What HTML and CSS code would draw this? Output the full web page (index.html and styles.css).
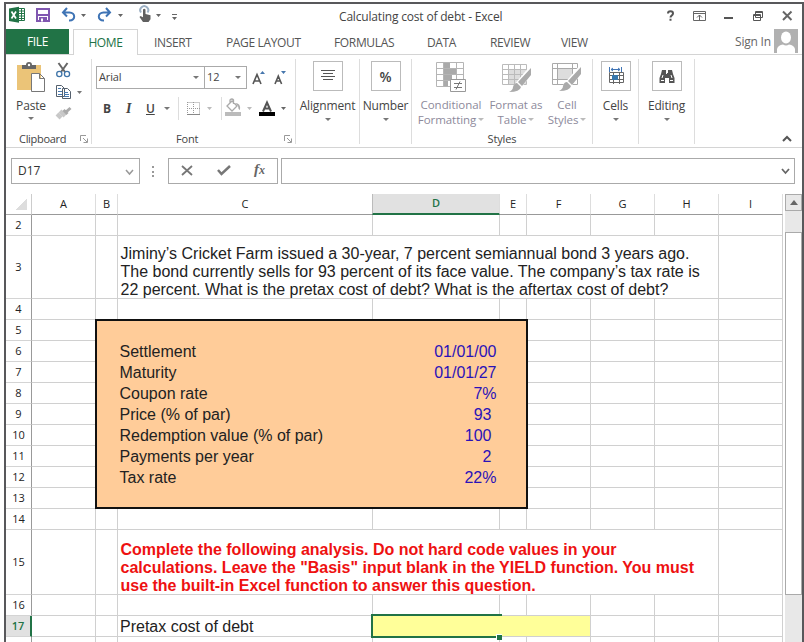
FILE: index.html
```html
<!DOCTYPE html>
<html lang="en">
<head>
    <meta charset="utf-8">
    <meta name="viewport" content="width=device-width, initial-scale=1.0">
    <title>Calculating cost of debt - Excel</title>
    <link rel="stylesheet" href="styles.css">
</head>
<body>
    <div class="window">
        <div class="titlebar">
            <svg class="quick-icons" width="180" height="25" viewBox="6 4 180 25">
                <path fill="#fff" stroke="#217346" d="M17.5 8.500h7v12h-7z"/>
                <path stroke="#217346" d="M19 11h5M19 13.500h5M19 16h5M19 18.500h5M21.500 9v11"/>
                <path fill="#217346" d="M9 8.500l10-1.800v16l-10-1.700z"/>
                <path stroke="#fff" stroke-width="1.700" d="M11.500 11.500l4.500 7M16 11.500l-4.500 7"/>
                <path fill="#fff" stroke="#8057b0" stroke-width="2" d="M37 9h12v12H37z"/>
                <path fill="#8057b0" d="M36 14h14v2H36zM39 17h8v5h-8z"/>
                <path fill="#fff" d="M41 18.500h2v3h-2z"/>
                <path fill="none" stroke="#3f74b5" stroke-width="2" d="M67 8l-4 4.500 4 4M63 12.500h6.500c6 0 6.500 8 0 8H69"/>
                <path fill="none" stroke="#3f74b5" stroke-width="2" d="M106 8l4 4.500-4 4M110 12.500h-6.500c-6 0-6.500 8 0 8h.5"/>
                <path fill="#666" d="M81 14h5l-2.500 3zM118 14h5l-2.500 3zM156 14h5l-2.500 3zM172 17h5l-2.500 3z"/>
                <path stroke="#666" d="M172 14.500h5"/>
                <path fill="none" stroke="#9cb0c4" stroke-width="2" d="M141 12.500a4 4 0 1 1 6.500 0"/>
                <path fill="#606060" d="M143 9.500q1.300-1.500 2.500 0V14l5 1.200v4L148.500 22H143l-3.500-5 1-1 2.500 1.300z"/>
            </svg>
            <div class="title">Calculating cost of debt - Excel</div>
            <svg class="window-icons" width="140" height="25" viewBox="662 4 140 25">
                <path fill="none" stroke="#555" stroke-width="2" d="M668 13.500c0-3 5-3 5 0 0 2-2.500 2-2.500 4M670.500 18.800v2"/>
                <path fill="none" stroke="#666" d="M693.500 11.500h12v9h-12zM694 13.500h11M699.500 20v-5M697 17.500l2.500-2.500 2.500 2.500"/>
                <path stroke="#555" stroke-width="2" d="M724 18h9"/>
                <path fill="#fff" stroke="#555" d="M755.500 11.500h7v6h-7zM755 12.500h8M753.500 14.500h7v6h-7zM753 15.500h8"/>
                <path stroke="#666" stroke-width="2" d="M783 11.500l8.500 8.500M791.500 11.500L783 20"/>
            </svg>
        </div>

        <div class="tabs">
            <div class="tab file">FILE</div>
            <div class="tab home">HOME</div>
            <div class="tab insert">INSERT</div>
            <div class="tab page">PAGE LAYOUT</div>
            <div class="tab formulas">FORMULAS</div>
            <div class="tab data">DATA</div>
            <div class="tab review">REVIEW</div>
            <div class="tab view">VIEW</div>
            <div class="signin">Sign In</div>
            <svg class="avatar" width="24" height="24" viewBox="0 0 24 24">
                <path fill="#b1b1b1" d="M0 0h24v24H0z"/>
                <ellipse cx="12" cy="8.500" rx="5" ry="6" fill="#fff"/>
                <path fill="#fff" d="M3 24v-4q1-4 6-4.500 3 2 6 0 5 .5 6 4.500v4z"/>
            </svg>
        </div>

        <div class="ribbon">
            <div class="group clipboard">
                <div class="tools">
                    <div class="paste">
                        <svg width="32" height="34" viewBox="15 60 32 34">
                            <path fill="#ebc478" d="M17 65h24v25H17z"/>
                            <path fill="#666" d="M22 69v-4h4q0-3 3-3t3 3h4v4z"/>
                            <circle cx="29" cy="65" r="1.200" fill="#fff"/>
                            <path fill="#fff" stroke="#777" d="M31.500 73.500h8l5 5v13h-13zM39.500 73.500v5h5"/>
                        </svg>
                        <span>Paste</span>
                        <i class="arrow"></i>
                    </div>
                    <svg width="30" height="62" viewBox="54 60 30 62">
                        <path fill="none" stroke="#666" stroke-width="2" d="M58.500 63l6.500 9M67.500 63L61 72"/>
                        <circle cx="59.300" cy="74" r="2.600" fill="none" stroke="#3f74a8" stroke-width="1.300"/>
                        <circle cx="67" cy="74" r="2.600" fill="none" stroke="#3f74a8" stroke-width="1.300"/>
                        <path fill="#fff" stroke="#55606d" d="M56.500 85.500h5l3 3v8h-8zM62.500 88.500h5l3 3v7h-8z"/>
                        <path stroke="#4779b0" d="M58 88.500h3M58 91.500h4M58 94.500h4M64 92.500h4M64 94.500h5M64 96.500h5"/>
                        <path fill="#777" d="M77 91h5l-2.500 3z"/>
                        <path stroke="#c8c8c8" stroke-width="4" d="M57 114l4 4M60 111l5 5"/>
                        <path stroke="#aaa" stroke-width="3" d="M63.500 110l4 4M66 112l4.500-4"/>
                    </svg>
                </div>
                <div class="label">Clipboard</div>
                <svg class="launcher" width="8" height="8"><path fill="none" stroke="#999" d="M.5 6V.5H6M3 3l4 4M7.500 3.500v4h-4"/></svg>
            </div>

            <div class="group font">
                <div class="font-row">
                    <div class="select family">Arial<i class="arrow"></i></div>
                    <div class="select size">12<i class="arrow"></i></div>
                    <svg width="42" height="23" viewBox="249 66 42 23">
                        <path fill="none" stroke="#555" stroke-width="1.600" d="M253 84l4-9.500 4 9.500M254.500 81h5.500M275 84l3.300-8 3.300 8M276.200 81h4.500"/>
                        <path fill="#4777ad" d="M260 74h5l-2.500-3zM281 71h5l-2.500 3z"/>
                    </svg>
                </div>
                <div class="format-row">
                    <b>B</b><em>I</em><u>U</u><i class="arrow"></i>
                    <svg width="117" height="25" viewBox="177 96 117 25">
                        <path stroke="#ddd" d="M178.500 97v23M221.500 97v23"/>
                        <path fill="none" stroke="#999" stroke-dasharray="1 1" d="M187.500 102.500h12v11M193.500 102v12M187 108.500h13M187.500 102v12"/>
                        <path stroke="#888" d="M187 114.500h13"/>
                        <path fill="#bbb" d="M207 107h5l-2.500 3zM247 107h5l-2.500 3z"/>
                        <path fill="#bbb" d="M225 112h16v4h-16z"/>
                        <path fill="#fff" stroke="#aaa" stroke-width="1.300" d="M227 106l5-5 5 5-5 5zM230 103v-3q2-2 3.500 0v4"/>
                        <path fill="#aaa" d="M235 103q6 0 5 7-2-1-2-4z"/>
                        <path fill="none" stroke="#555" stroke-width="2" d="M263 111.500l4-9 4 9M264.500 108.500h5.500"/>
                        <path fill="#000" d="M259 112h16v4h-16z"/>
                        <path fill="#666" d="M281 107h5l-2.500 3z"/>
                    </svg>
                </div>
                <div class="label">Font</div>
                <svg class="launcher" width="8" height="8"><path fill="none" stroke="#999" d="M.5 6V.5H6M3 3l4 4M7.500 3.500v4h-4"/></svg>
            </div>

            <div class="group alignment">
                <div class="button">
                    <svg width="28" height="28"><path stroke="#555" d="M7 8.500h14M9 11.500h10M7 14.500h14M9 17.500h10"/></svg>
                </div>
                <span>Alignment</span><i class="arrow"></i>
            </div>
            <div class="group number">
                <div class="button percent">%</div>
                <span>Number</span><i class="arrow"></i>
            </div>

            <div class="group styles">
                <div class="style-items">
                    <div class="style-item conditional">
                        <svg width="32" height="32" viewBox="436 61 32 32">
                            <path fill="#fff" stroke="#b5b5b5" d="M437.500 62.500h27v24h-27zM437 68.500h27M437 74.500h27M437 80.500h27M444.500 62v24M457.500 62v24"/>
                            <path fill="#aaa" d="M445 63h6v5h-6zM445 69h12v5h-12zM445 75h8v5h-8zM445 81h4v5h-4z"/>
                            <path fill="#fff" stroke="#999" d="M451.500 79.500h15v12h-15z"/>
                            <path stroke="#777" d="M455 83.500h8M455 87.500h8M461 81.500l-4 8"/>
                        </svg>
                        <span>Conditional<br>Formatting<i class="arrow"></i></span>
                    </div>
                    <div class="style-item table">
                        <svg width="32" height="32" viewBox="502 61 32 32">
                            <path fill="#ddd" d="M510 70h18v14h-18z"/>
                            <path fill="none" stroke="#bbb" d="M504.500 64.500h24v20h-24zM504 69.500h24M504 74.500h24M504 79.500h24M510.500 64v20M516.500 64v20M522.500 64v20"/>
                            <path stroke="#fff" stroke-width="7" d="M534 69l-16 19"/>
                            <path fill="#aaa" d="M533 68v7l-9 11-4-4zM519 83l4 4q-1 5-12 5 4-2 4-5 1-4 4-4z"/>
                        </svg>
                        <span>Format as<br>Table<i class="arrow"></i></span>
                    </div>
                    <div class="style-item cell-styles">
                        <svg width="32" height="32" viewBox="553 60 32 32">
                            <path fill="#fff" stroke="#aaa" d="M554.500 62.500h25v21h-25zM554 67.500h26M554 78.500h26M559.500 62v21M574.500 62v21"/>
                            <path fill="#ddd" d="M560 68h14v10h-14z"/>
                            <path stroke="#fff" stroke-width="7" d="M584 67l-16 19"/>
                            <path fill="#aaa" d="M583 66v7l-9 11-4-4zM569 81l4 4q-1 5-12 5 4-2 4-5 1-4 4-4z"/>
                        </svg>
                        <span>Cell<br>Styles<i class="arrow"></i></span>
                    </div>
                </div>
                <div class="label">Styles</div>
            </div>

            <div class="group cells">
                <div class="button">
                    <svg width="28" height="28">
                        <path fill="none" stroke="#3f74b5" d="M7.500 5v5M19.500 5v5M9 7.500h9M11 6l-2 1.500 2 1.500M16 6l2 1.500-2 1.500"/>
                        <path fill="#fff" stroke="#666" d="M7.500 10.500h14v10h-14zM7 13.500h14M7 17.500h14M11.500 10v12M17.500 10v12"/>
                        <path fill="#3777ad" d="M10 13h6v5h-6z"/>
                    </svg>
                </div>
                <span>Cells</span><i class="arrow"></i>
            </div>
            <div class="group editing">
                <div class="button">
                    <svg width="28" height="28">
                        <path fill="#555" d="M9 8h4v3h2V8h4l1 4 1.500 4v5H16v-5h-4v5H6.500v-5L8 12z"/>
                        <path stroke="#fff" d="M8 18.500h3M17 18.500h3M13.500 9v3M10 13l-1 3M18 13l1 3"/>
                    </svg>
                </div>
                <span>Editing</span><i class="arrow"></i>
            </div>
            <svg class="collapse" width="10" height="8"><path fill="none" stroke="#555" stroke-width="2" d="M1 6l4-4 4 4"/></svg>
        </div>

        <div class="formula-bar">
            <div class="name-box">D17<svg width="9" height="7"><path fill="none" stroke="#999" stroke-width="1.500" d="M1 1l3.500 4L8 1"/></svg></div>
            <div class="dots"></div>
            <div class="fx">
                <svg width="108" height="24">
                    <path fill="none" stroke="#777" stroke-width="1.800" d="M13 7l10 9M23 7l-10 9"/>
                    <path fill="none" stroke="#777" stroke-width="2.500" d="M49 11l3.500 4L61 7"/>
                </svg>
                <span>f<small>x</small></span>
            </div>
            <div class="formula-input"><svg width="9" height="7"><path fill="none" stroke="#666" stroke-width="1.800" d="M1 1l3.500 4L8 1"/></svg></div>
        </div>

        <div class="workspace">
            <div class="sheet" id="sheet">
                <div class="corner"></div>
            </div>
            <div class="scrollbar">
                <div class="scroll-up"></div>
                <div class="thumb"></div>
            </div>
        </div>
    </div>

    <script>
        const sheet = document.getElementById('sheet');
        const columns = ['A', 'B', 'C', 'D', 'E', 'F', 'G', 'H', 'I'];

        const inputs = [
            ['Settlement', '01/01/00'],
            ['Maturity', '01/01/27'],
            ['Coupon rate', '7%'],
            ['Price (% of par)', '93'],
            ['Redemption value (% of par)', '100'],
            ['Payments per year', '2'],
            ['Tax rate', '22%']
        ];

        function add(className, html, row, col, rowSpan = 1, colSpan = 1) {
            const el = document.createElement('div');
            el.className = className;
            el.innerHTML = html;
            el.style.gridArea = `${row} / ${col} / span ${rowSpan} / span ${colSpan}`;
            sheet.appendChild(el);
        }

        columns.forEach((name, i) => {
            add(name === 'D' ? 'col-head active' : 'col-head', name, 1, i + 2);
        });

        // Sheet row n sits on grid line n, the header takes line 1
        for (let row = 2; row <= 18; row++) {
            add(row === 17 ? 'row-head active' : 'row-head', row < 18 ? row : '', row, 1);
            columns.forEach((name, i) => add('cell', '', row, i + 2));
        }

        // Merged cells
        add('merged question',
            'Jiminy’s Cricket Farm issued a 30-year, 7 percent semiannual bond 3 years ago.<br>' +
            'The bond currently sells for 93 percent of its face value. The company’s tax rate is<br>' +
            '22 percent. What is the pretax cost of debt? What is the aftertax cost of debt?', 3, 4, 1, 6);
        add('merged task',
            'Complete the following analysis. Do not hard code values in your<br>' +
            'calculations. Leave the "Basis" input blank in the YIELD function. You must<br>' +
            'use the built-in Excel function to answer this question.', 15, 4, 1, 6);

        add('inputs', inputs.map(([label, value]) =>
            `<div class="input-row"><span>${label}</span>` +
            `<span class="value${/^\d+$/.test(value) ? ' plain' : ''}">${value}</span></div>`
        ).join(''), 5, 3, 9, 4);

        add('text', 'Pretax cost of debt', 17, 4);
        add('answer', '', 17, 5, 1, 3);
        add('selection', '', 17, 5);
    </script>
</body>
</html>
```
FILE: styles.css
```css
* {
    box-sizing: border-box;
}

body {
    margin: 0;
    padding: 2px 0 0 4px;
    background: #fff;
    color: #444;
    font-family: "Open Sans", "Noto Sans", sans-serif;
    font-size: 12px;
    overflow: hidden;
}

svg {
    display: block;
    flex: none;
}

.window {
    width: 800px;
    height: 640px;
    border: 2px solid #58585b;
    border-bottom: 0;
    overflow: hidden;
}

.arrow {
    display: inline-block;
    border: 3px solid transparent;
    border-top: 3px solid #777;
    border-bottom: 0;
}

/* Title bar and tabs */
.titlebar {
    display: flex;
    height: 25px;
}

.title {
    width: 476px;
    padding-left: 153px;
    font-size: 12px;
    line-height: 26px;
    letter-spacing: -0.18px;
    white-space: nowrap;
}

.tabs {
    display: flex;
    height: 26px;
    border-bottom: 1px solid #d4d4d4;
    line-height: 27px;
    color: #555;
    letter-spacing: -0.35px;
    white-space: nowrap;
}

.tab {
    flex: none;
}

.file {
    width: 63px;
    margin-right: 4px;
    background: #217346;
    color: #fff;
    text-align: center;
    line-height: 25px;
}

.home {
    width: 65px;
    height: 26px;
    border: 1px solid #d4d4d4;
    border-bottom: 0;
    background: #fff;
    color: #217346;
    text-align: center;
    line-height: 26px;
}

.insert {
    width: 72px;
    padding-left: 16px;
}

.page {
    width: 108px;
    padding-left: 16px;
}

.formulas {
    width: 94px;
    padding-left: 16px;
}

.data {
    width: 62px;
    padding-left: 15px;
}

.review {
    width: 72px;
    padding-left: 16px;
}

.view {
    width: 189px;
    padding-left: 15px;
}

.signin {
    width: 39px;
    line-height: 26px;
    color: #666;
    letter-spacing: -0.2px;
}

/* Ribbon */
.ribbon {
    display: flex;
    height: 93px;
    padding: 4px 0 3px;
    border-bottom: 1px solid #d4d4d4;
}

.group {
    position: relative;
    display: flex;
    flex-direction: column;
    align-items: center;
    flex: none;
    border-right: 1px solid #ddd;
    letter-spacing: -0.15px;
}

.label {
    position: absolute;
    bottom: -3px;
    font-size: 11px;
    line-height: 16px;
}

.launcher {
    position: absolute;
    right: 3px;
    bottom: 1px;
}

.clipboard {
    width: 86px;
}

.clipboard .label {
    left: 13px;
    letter-spacing: -0.3px;
}

.tools {
    display: flex;
    align-self: stretch;
    padding: 1px 0 0 9px;
}

.paste {
    display: flex;
    flex-direction: column;
    align-items: center;
    width: 32px;
    margin-right: 7px;
    line-height: 18px;
}

.paste span {
    margin-top: 3px;
}

.paste .arrow {
    margin-top: 2px;
}

.font {
    width: 204px;
    align-items: flex-start;
}

.font .label {
    left: 84px;
}

.font-row {
    display: flex;
    padding: 7px 0 0 4px;
}

.select {
    display: flex;
    align-items: center;
    justify-content: space-between;
    height: 23px;
    padding: 0 5px 3px 2px;
    border: 1px solid #aaa;
    font-size: 11px;
}

.select .arrow {
    margin-top: 3px;
}

.family {
    width: 109px;
}

.size {
    width: 43px;
    margin-left: -1px;
    margin-right: 2px;
}

.format-row {
    display: flex;
    align-items: center;
    height: 25px;
    margin-top: 7px;
    padding-left: 11px;
    font-size: 12px;
}

.format-row b {
    width: 23px;
}

.format-row em {
    width: 20px;
    font-family: "Liberation Serif", serif;
    font-size: 14px;
    font-weight: bold;
}

.format-row u {
    width: 18px;
    font-weight: 600;
}

.format-row .arrow {
    margin-right: 7px;
}

.alignment, .number, .cells, .editing {
    padding-top: 2px;
    line-height: 18px;
}

.button {
    width: 30px;
    height: 30px;
    margin-bottom: 6px;
    border: 1px solid #bbb;
}

.group > .arrow {
    margin-top: 3px;
}

.percent {
    font-size: 14px;
    font-weight: 600;
    line-height: 29px;
    text-align: center;
}

.alignment {
    width: 64px;
}

.number {
    width: 52px;
}

.styles {
    width: 181px;
}

.cells {
    width: 46px;
}

.editing {
    width: 56px;
}

.style-items {
    display: flex;
    padding-top: 2px;
    color: #8d8a9b;
    font-size: 11.5px;
    line-height: 15px;
    text-align: center;
    white-space: nowrap;
    letter-spacing: -0.05px;
}

.style-item {
    display: flex;
    flex-direction: column;
    align-items: center;
    gap: 4px;
}

.style-item .arrow {
    margin: 0 0 3px 2px;
    border-top-color: #bbb;
}

.conditional {
    width: 72px;
}

.table {
    width: 58px;
}

.cell-styles {
    width: 44px;
}

.collapse {
    margin: auto 10px 1px auto;
}

/* Formula bar */
.formula-bar {
    display: flex;
    height: 46px;
    padding: 10px 7px 10px 5px;
}

.name-box, .fx, .formula-input {
    display: flex;
    align-items: center;
    justify-content: space-between;
    border: 1px solid #aaa;
}

.name-box {
    width: 129px;
    padding: 0 5px 2px 6px;
    color: #333;
}

.name-box svg {
    margin-top: 4px;
}

.dots {
    width: 2px;
    height: 11px;
    margin: 8px 14px 0 12px;
    background: repeating-linear-gradient(#999 0 2px, transparent 2px 4.5px);
}

.fx {
    position: relative;
    width: 110px;
    margin-right: 3px;
}

.fx span {
    position: absolute;
    left: 85px;
    top: 2px;
    color: #666;
    font: italic bold 15px "Liberation Serif", serif;
}

.fx small {
    font-size: 12px;
}

.formula-input {
    flex: 1;
    justify-content: flex-end;
    padding-right: 4px;
}

/* Worksheet */
.workspace {
    display: flex;
    height: 449px;
}

.sheet {
    position: relative;
    display: grid;
    flex: none;
    grid-template-columns: 26px 64px 22px 255px 127px 27px repeat(4, 64px);
    grid-template-rows: 21px 21px 63px repeat(11, 21px) 65px 21px 21px 21px;
    width: 777px;
    color: #222;
}

.corner {
    border-right: 1px solid #ccc;
    border-bottom: 1px solid #aaa;
    background: linear-gradient(135deg, transparent 50%, #ddd 50%) 10px 5px / 11px 11px no-repeat;
}

.col-head, .row-head {
    font-size: 11px;
    text-align: center;
}

.col-head {
    border-right: 1px solid #ddd;
    border-bottom: 1px solid #999;
    line-height: 20px;
}

.col-head.active {
    border-bottom: 2px solid #217346;
    background: #e1e1e1;
    color: #217346;
    line-height: 18px;
    margin-left: -1px;
    border-left: 1px solid #bbb;
    font-weight: 600;
}

.row-head {
    display: flex;
    align-items: center;
    justify-content: center;
    padding-bottom: 2px;
    border-right: 1px solid #999;
    border-bottom: 1px solid #d4d4d4;
}

.row-head.active {
    border-right: 2px solid #217346;
    background: #e1e1e1;
    color: #217346;
    font-weight: 600;
}

.cell {
    border-right: 1px solid #d0d0d0;
    border-bottom: 1px solid #d0d0d0;
}

.merged, .text, .inputs {
    font-family: "Liberation Sans", Arial, sans-serif;
    font-size: 16px;
    white-space: nowrap;
}

.merged {
    margin: 0 1px 1px 0;
    padding-left: 2.5px;
    background: #fff;
    line-height: 18px;
}

.question {
    padding-top: 9px;
}

.task {
    padding-top: 11px;
    color: #ee1111;
    font-weight: bold;
}

.inputs {
    z-index: 1;
    margin: -1px -1px 0;
    padding: 20px 29.5px 0 22.5px;
    border: 2px solid #111;
    background: #ffcc99;
    line-height: 21px;
}

.input-row {
    display: flex;
    justify-content: space-between;
}

.value {
    color: #2a12b8;
}

.plain {
    padding-right: 5px;
}

.text {
    padding-left: 2px;
    line-height: 22px;
}

.answer {
    margin: 0 1px 1px 0;
    background: #ffff99;
}

.selection {
    position: relative;
    margin: -2px -2px -1px -2px;
    border: 2px solid #217346;
    border-right: 0;
}

.selection::after {
    content: "";
    position: absolute;
    right: 0;
    bottom: -4px;
    width: 5px;
    height: 5px;
    background: #217346;
    border: 1px solid #fff;
    border-width: 1px 0 0 1px;
}

/* Scrollbar */
.scrollbar {
    width: 17px;
    margin-left: 2px;
    background: #e8e8e8;
}

.scroll-up {
    display: flex;
    align-items: center;
    justify-content: center;
    height: 17px;
    border: 1px solid #aaa;
}

.scroll-up::after {
    content: "";
    border: 4px solid transparent;
    border-top: 0;
    border-bottom: 5px solid #666;
}

.thumb {
    height: 363px;
    margin-top: 21px;
    border: 1px solid #aaa;
    background: #fff;
}
```
